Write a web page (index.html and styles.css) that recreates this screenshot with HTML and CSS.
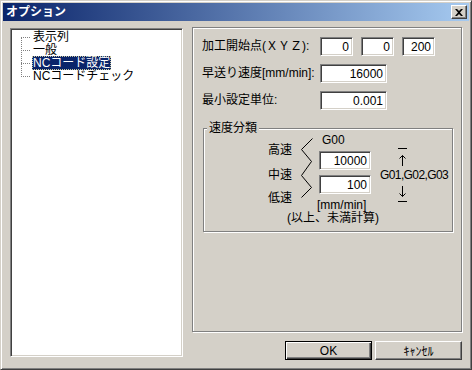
FILE: index.html
```html
<!DOCTYPE html>
<html lang="ja">
<head>
    <meta charset="UTF-8">
    <title>オプション</title>
    <link rel="stylesheet" href="styles.css">
</head>
<body>
    <div class="window">
        <!-- Title bar -->
        <div class="titlebar">
            <span class="title">オプション</span>
            <button class="close-btn">
                <svg width="8" height="7" viewBox="0 0 8 7"><path d="M0 0 L2 0 L4 2 L6 0 L8 0 L5 3.5 L8 7 L6 7 L4 5 L2 7 L0 7 L3 3.5 Z" fill="#000"/></svg>
            </button>
        </div>

        <div class="content">
            <!-- Tree -->
            <div class="tree">
                <ul class="tree-list">
                    <li><span>表示列</span></li>
                    <li><span>一般</span></li>
                    <li><span class="selected">NCコード設定</span></li>
                    <li><span>NCコードチェック</span></li>
                </ul>
            </div>

            <div class="right-col">
                <div class="panel">
                    <div class="form-grid">
                        <label>加工開始点(ＸＹＺ):</label>
                        <div class="xyz">
                            <input type="text" class="num small" value="0">
                            <input type="text" class="num small" value="0">
                            <input type="text" class="num small" value="200">
                        </div>
                        <label>早送り速度[mm/min]:</label>
                        <input type="text" class="num wide" value="16000">
                        <label>最小設定単位:</label>
                        <input type="text" class="num wide" value="0.001">
                    </div>

                    <!-- Speed group -->
                    <div class="group">
                        <span class="group-title">速度分類</span>
                        <div class="speed-row">
                            <div class="speed-labels">
                                <span class="lbl-high">高速</span>
                                <span class="lbl-mid">中速</span>
                                <span class="lbl-low">低速</span>
                            </div>
                            <svg class="zigzag" width="15" height="66" viewBox="0 0 15 66">
                                <polyline points="13.5,4.5 2.5,15.5 12.5,27.5 2.5,41.5 12.5,53.5 2.5,63.5" fill="none" stroke="#000" stroke-width="1"/>
                            </svg>
                            <div class="speed-inputs">
                                <span class="g00">G00</span>
                                <input type="text" class="num speed" value="10000">
                                <input type="text" class="num speed" value="100">
                                <span class="unit">[mm/min]</span>
                            </div>
                            <div class="gcodes">
                                <div class="dash"></div>
                                <svg class="arrow" width="7" height="11" viewBox="0 0 7 11"><path d="M3.5 0.5 V11 M0.5 3.5 L3.5 0.5 L6.5 3.5" fill="none" stroke="#000"/></svg>
                                <span class="gtext">G01,G02,G03</span>
                                <svg class="arrow down" width="7" height="11" viewBox="0 0 7 11"><path d="M3.5 0 V10.5 M0.5 7.5 L3.5 10.5 L6.5 7.5" fill="none" stroke="#000"/></svg>
                                <div class="dash bottom"></div>
                            </div>
                        </div>
                        <div class="note">(以上、未満計算)</div>
                    </div>
                </div>

                <div class="buttons">
                    <button class="btn default">OK</button>
                    <button class="btn">ｷｬﾝｾﾙ</button>
                </div>
            </div>
        </div>
    </div>
</body>
</html>
```

FILE: styles.css
```css
body {
    margin: 0;
    font-family: "Liberation Sans", "Noto Sans CJK JP", sans-serif;
    font-size: 12px;
    line-height: 13px;
    color: #000;
}

/* Window frame */
.window {
    width: 472px;
    height: 370px;
    box-sizing: border-box;
    background: #d4d0c8;
    border: 1px solid;
    border-color: #d4d0c8 #404040 #404040 #d4d0c8;
    box-shadow: inset 1px 1px 0 #fff, inset -1px -1px 0 #808080;
    padding: 2px;
}

.titlebar {
    height: 18px;
    display: flex;
    align-items: center;
    justify-content: space-between;
    background: linear-gradient(to right, #0a246a, #a6caf0);
    padding: 0 2px 0 3px;
}

.title {
    color: #fff;
    font-weight: bold;
}

.close-btn {
    width: 16px;
    height: 14px;
    padding: 0;
    display: flex;
    align-items: center;
    justify-content: center;
    background: #d4d0c8;
    border: 1px solid;
    border-color: #fff #404040 #404040 #fff;
    box-shadow: inset -1px -1px 0 #808080;
}

.content {
    display: flex;
    padding: 7px 7px 0 7px;
}

/* Tree view */
.tree {
    width: 173px;
    height: 329px;
    flex-shrink: 0;
    box-sizing: border-box;
    background: #fff;
    border: 1px solid;
    border-color: #808080 #fff #fff #808080;
    box-shadow: inset 1px 1px 0 #404040, inset -1px -1px 0 #d4d0c8;
    padding: 2px 0 0 21px;
}

.tree-list {
    list-style: none;
    margin: 0;
    padding: 0;
    position: relative;
}

.tree-list::before {
    content: "";
    position: absolute;
    left: -11px;
    top: 6px;
    bottom: 6px;
    border-left: 1px dotted #808080;
}

.tree-list li {
    position: relative;
    height: 13px;
}

.tree-list li::before {
    content: "";
    position: absolute;
    left: -11px;
    top: 6px;
    width: 9px;
    border-top: 1px dotted #808080;
}

.tree-list span {
    padding: 0 1px;
}

.tree-list .selected {
    background: #0a246a;
    color: #fff;
    outline: 1px dotted #c8c8a0;
    outline-offset: -1px;
}

/* Right side */
.right-col {
    width: 270px;
    margin-left: 9px;
    display: flex;
    flex-direction: column;
}

.panel {
    height: 305px;
    margin-top: -1px;
    box-sizing: border-box;
    border: 1px solid #808080;
    box-shadow: 1px 1px 0 #fff, inset 1px 1px 0 #fff;
    padding: 9px 0 0 9px;
}

.form-grid {
    display: grid;
    grid-template-columns: 118px auto;
    row-gap: 8px;
    align-items: center;
}

.form-grid label {
    white-space: nowrap;
}

.xyz {
    display: flex;
    gap: 8px;
}

input.num {
    height: 19px;
    box-sizing: border-box;
    font-family: "Liberation Sans", "Noto Sans CJK JP", sans-serif;
    font-size: 12px;
    text-align: right;
    padding: 0 3px 0 0;
    margin: 0;
    background: #fff;
    border: 1px solid;
    border-color: #808080 #fff #fff #808080;
    box-shadow: inset 1px 1px 0 #404040, inset -1px -1px 0 #d4d0c8;
    outline: none;
}

input.small {
    width: 33px;
}

input.wide {
    width: 67px;
}

input.speed {
    width: 52px;
}

/* Group box */
.group {
    position: relative;
    width: 250px;
    margin: 18px 0 0 1px;
    box-sizing: border-box;
    border: 1px solid #808080;
    box-shadow: 1px 1px 0 #fff, inset 1px 1px 0 #fff;
    padding: 5px 0 6px 0;
}

.group-title {
    position: absolute;
    top: -7px;
    left: 3px;
    padding: 0 2px;
    background: #d4d0c8;
}

.speed-row {
    display: flex;
    align-items: flex-start;
    margin-left: 64px;
}

.speed-row > * {
    flex-shrink: 0;
}

.speed-labels {
    width: 24px;
    display: flex;
    flex-direction: column;
    white-space: nowrap;
}

.lbl-high {
    margin-top: 10px;
}

.lbl-mid {
    margin-top: 12px;
}

.lbl-low {
    margin-top: 10px;
}

.zigzag {
    margin-left: 7px;
}

.speed-inputs {
    width: 52px;
    margin-left: 5px;
    display: flex;
    flex-direction: column;
    gap: 5px;
}

.g00 {
    padding-left: 3px;
    margin-bottom: -1px;
}

.unit {
    margin-left: -2px;
    white-space: nowrap;
}

.gcodes {
    margin-left: 9px;
    display: flex;
    flex-direction: column;
    align-items: flex-start;
    white-space: nowrap;
}

.dash {
    width: 9px;
    height: 1px;
    background: #000;
    margin: 14px 0 0 18px;
}

.dash.bottom {
    margin-top: 4px;
}

.arrow {
    margin: 6px 0 0 19px;
}

.arrow.down {
    margin-top: 4px;
}

.gtext {
    margin-top: 3px;
    letter-spacing: -0.6px;
}

.note {
    margin-left: 83px;
}

/* Buttons */
.buttons {
    display: flex;
    justify-content: flex-end;
    gap: 3px;
    margin-top: 9px;
}

.btn {
    width: 87px;
    height: 19px;
    padding: 0;
    font-family: "Liberation Sans", "Noto Sans CJK JP", sans-serif;
    font-size: 12px;
    background: #d4d0c8;
    border: 1px solid;
    border-color: #fff #404040 #404040 #fff;
    box-shadow: inset -1px -1px 0 #808080;
}

.btn.default {
    border-color: #000;
    box-shadow: inset 1px 1px 0 #fff, inset -1px -1px 0 #404040, inset -2px -2px 0 #808080;
}
```
